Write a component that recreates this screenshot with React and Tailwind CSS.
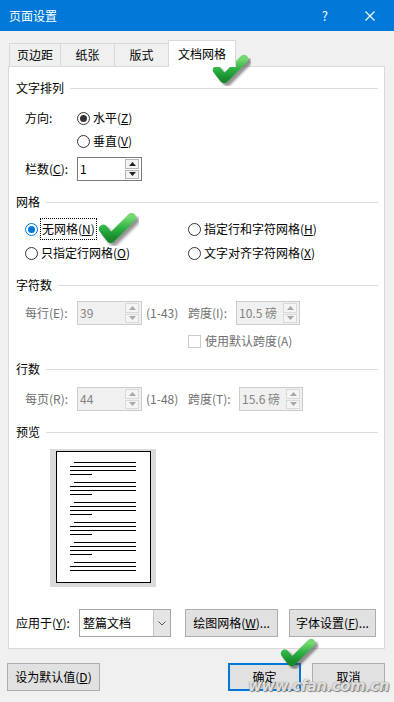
import React from 'react'

const font = "font-['Noto_Sans_CJK_SC','Noto_Sans',sans-serif]"

function Radio({ on, blue }) {
  return (
    <span className={`w-[13px] h-[13px] shrink-0 rounded-full border flex items-center justify-center bg-white ${blue ? 'border-[#0078d7]' : 'border-[#333]'}`}>
      {on && <span className={`w-[7px] h-[7px] rounded-full ${blue ? 'bg-[#0078d7]' : 'bg-[#333]'}`} />}
    </span>
  )
}

function Header({ title, mt }) {
  return (
    <div className={`flex items-center h-[16px] ${mt}`}>
      <span className="text-black">{title}</span>
      <span className="flex-1 h-px bg-[#dcdcdc] ml-[6px]" />
    </div>
  )
}

function Arrow({ up, off }) {
  return (
    <svg width="7" height="4" viewBox="0 0 7 4">
      <path d={up ? 'M0 4 L3.5 0 L7 4 Z' : 'M0 0 L7 0 L3.5 4 Z'} fill={off ? '#a8a8a8' : '#222'} />
    </svg>
  )
}

function Spin({ value, off, w }) {
  return (
    <div className={`flex h-[24px] ${w} border ${off ? 'border-[#cccccc] bg-[#f0f0f0] text-[#838383]' : 'border-[#7a7a7a] bg-white text-black'}`}>
      <span className="flex-1 pl-[2px] flex items-center">{value}</span>
      <div className="w-[16px] flex flex-col gap-px py-[1px] pr-[2px]">
        <span className={`flex-1 flex items-center justify-center border ${off ? 'border-[#d9d9d9]' : 'border-[#b5b5b5]'} bg-[#f4f4f4]`}><Arrow up off={off} /></span>
        <span className={`flex-1 flex items-center justify-center border ${off ? 'border-[#d9d9d9]' : 'border-[#b5b5b5]'} bg-[#f4f4f4]`}><Arrow off={off} /></span>
      </div>
    </div>
  )
}

// green tick drawn over the screenshot
function Check({ id, className }) {
  return (
    <svg className={`absolute ${className}`} viewBox="0 0 40 34">
      <defs>
        <linearGradient id={id} x1="0" y1="0" x2="0" y2="1">
          <stop offset="0" stopColor="#74d870" />
          <stop offset="0.5" stopColor="#2fb244" />
          <stop offset="1" stopColor="#178a2c" />
        </linearGradient>
        <filter id={id + 'b'} x="-20%" y="-20%" width="140%" height="140%">
          <feGaussianBlur stdDeviation="1.3" />
        </filter>
      </defs>
      <path d="M6 18 L13 27 L33 7" transform="translate(3 3)" fill="none" stroke="#3a3a3a" strokeOpacity="0.55" strokeWidth="8.5" strokeLinecap="round" strokeLinejoin="round" filter={`url(#${id}b)`} />
      <path d="M6 18 L13 27 L33 7" fill="none" stroke={`url(#${id})`} strokeWidth="8.5" strokeLinecap="round" strokeLinejoin="round" />
    </svg>
  )
}

const TABS = [['页边距', 'w-[51px]'], ['纸张', 'w-[54px]'], ['版式', 'w-[54px]']]

function PageLines({ count }) {
  const rows = ['ml-[17px] w-[62px]', 'ml-[13px] w-[66px]', 'ml-[13px] w-[66px]', 'ml-[13px] w-[22px]']
  return (
    <div className="flex flex-col gap-[3px]">
      {rows.slice(0, count).map((c, i) => <span key={i} className={`h-px bg-black ${c}`} />)}
    </div>
  )
}

export default function App() {
  return (
    <div className={`relative w-[394px] h-[702px] overflow-hidden bg-[#f0f0f0] text-[12px] leading-none ${font}`}>
      <div className="h-[31px] bg-[#0078d7] flex items-center pl-[9px] text-white text-[12px]">
        <span>页面设置</span>
        <span className="ml-auto text-[13px]">?</span>
        <svg className="ml-[37px] mr-[19px]" width="10" height="10" viewBox="0 0 10 10">
          <path d="M0.5 0.5 L9.5 9.5 M9.5 0.5 L0.5 9.5" stroke="#fff" strokeWidth="1.1" />
        </svg>
      </div>

      <div className="mt-[9px] h-[26px] flex items-end pl-[9px]">
        {TABS.map(([t, w]) => (
          <span key={t} className={`${w} h-[23px] flex items-center justify-center border-t border-l border-[#d9d9d9]`}>{t}</span>
        ))}
        <span className="relative z-10 w-[68px] h-[27px] -mb-px flex items-center justify-center bg-white border border-b-0 border-[#d9d9d9]">文档网格</span>
      </div>

      <div className="ml-[8px] w-[377px] h-[583px] border border-[#d9d9d9] bg-white pl-[7px] pr-[6px] pt-[13px]">
        <Header title="文字排列" mt="" />
        <div className="mt-[14px] h-[16px] flex items-center pl-[9px]">
          <span className="w-[52px]">方向:</span>
          <Radio on />
          <span className="ml-[3px]">水平(<u>Z</u>)</span>
        </div>
        <div className="mt-[7px] h-[16px] flex items-center pl-[61px]">
          <Radio />
          <span className="ml-[3px]">垂直(<u>V</u>)</span>
        </div>
        <div className="mt-[8px] h-[24px] flex items-center pl-[9px]">
          <span className="w-[52px]">栏数(<u>C</u>):</span>
          <Spin value="1" w="w-[65px]" />
        </div>

        <Header title="网格" mt="mt-[13px]" />
        <div className="mt-[11px] h-[16px] flex items-center pl-[9px]">
          <div className="w-[163px] flex items-center">
            <Radio on blue />
            <span className="ml-[2px] h-[22px] px-px flex items-center border border-dotted border-black">无网格(<u>N</u>)</span>
          </div>
          <Radio />
          <span className="ml-[3px]">指定行和字符网格(<u>H</u>)</span>
        </div>
        <div className="mt-[8px] h-[16px] flex items-center pl-[9px]">
          <div className="w-[163px] flex items-center">
            <Radio />
            <span className="ml-[3px]">只指定行网格(<u>O</u>)</span>
          </div>
          <Radio />
          <span className="ml-[3px]">文字对齐字符网格(<u>X</u>)</span>
        </div>

        <Header title="字符数" mt="mt-[16px]" />
        <div className="mt-[8px] h-[24px] flex items-center pl-[9px] text-[#707070]">
          <div className="w-[163px] flex items-center">
            <span className="w-[52px]">每行(E):</span>
            <Spin value="39" off w="w-[65px]" />
            <span className="ml-[4px]">(1-43)</span>
          </div>
          <span className="w-[48px]">跨度(I):</span>
          <Spin value="10.5 磅" off w="w-[64px]" />
        </div>
        <div className="mt-[8px] h-[16px] flex items-center pl-[172px] text-[#707070]">
          <span className="w-[13px] h-[13px] border border-[#cccccc] bg-white" />
          <span className="ml-[4px]">使用默认跨度(A)</span>
        </div>

        <Header title="行数" mt="mt-[12px]" />
        <div className="mt-[10px] h-[24px] flex items-center pl-[9px] text-[#707070]">
          <div className="w-[163px] flex items-center">
            <span className="w-[52px]">每页(R):</span>
            <Spin value="44" off w="w-[65px]" />
            <span className="ml-[4px]">(1-48)</span>
          </div>
          <span className="w-[51px]">跨度(T):</span>
          <Spin value="15.6 磅" off w="w-[64px]" />
        </div>

        <Header title="预览" mt="mt-[13px]" />
        <div className="mt-[9px] ml-[34px] w-[106px] h-[138px] bg-[#dadada] pt-[2px] pl-[6px]">
          <div className="w-[95px] h-[132px] border border-black bg-white pt-[10px] flex flex-col gap-[7px]">
            {[4, 4, 4, 4, 4, 3].map((n, i) => <PageLines key={i} count={n} />)}
          </div>
        </div>

        <div className="mt-[22px] h-[28px] flex items-center">
          <span className="w-[63px]">应用于(<u>Y</u>):</span>
          <div className="w-[92px] h-[28px] flex border border-[#a6a6a6] bg-white">
            <span className="flex-1 flex items-center pl-[3px]">整篇文档</span>
            <span className="w-[17px] flex items-center justify-center bg-[#e5e5e5] border-l border-[#c4c4c4]">
              <svg width="8" height="5" viewBox="0 0 8 5"><path d="M0.5 0.5 L4 4 L7.5 0.5" fill="none" stroke="#555" /></svg>
            </span>
          </div>
          <span className="ml-[14px] w-[93px] h-[28px] flex items-center justify-center bg-[#e1e1e1] border border-[#adadad]">绘图网格(<u>W</u>)...</span>
          <span className="ml-[11px] w-[87px] h-[28px] flex items-center justify-center bg-[#e1e1e1] border border-[#adadad]">字体设置(<u>F</u>)...</span>
        </div>
      </div>

      <div className="mt-[14px] h-[28px] flex items-center">
        <span className="ml-[7px] w-[93px] h-[28px] flex items-center justify-center bg-[#e1e1e1] border border-[#adadad]">设为默认值(<u>D</u>)</span>
        <span className="ml-[128px] w-[73px] h-[28px] flex items-center justify-center bg-[#e1e1e1] border-2 border-[#0078d7]">确定</span>
        <span className="ml-[11px] w-[73px] h-[28px] flex items-center justify-center bg-[#e1e1e1] border border-[#adadad]">取消</span>
      </div>

      <span className="absolute left-[248px] top-[679px] text-[15px] italic font-bold text-white/80 font-['DejaVu_Sans',sans-serif] [text-shadow:0_0_1px_#555,1px_1px_1px_#888] tracking-[-0.5px]">www.cfan.com.cn</span>

      <Check id="c1" className="left-[211px] top-[51px] w-[40px] h-[36px]" />
      <Check id="c2" className="left-[97px] top-[210px] w-[42px] h-[36px]" />
      <Check id="c3" className="left-[278px] top-[636px] w-[41px] h-[33px]" />
    </div>
  )
}
